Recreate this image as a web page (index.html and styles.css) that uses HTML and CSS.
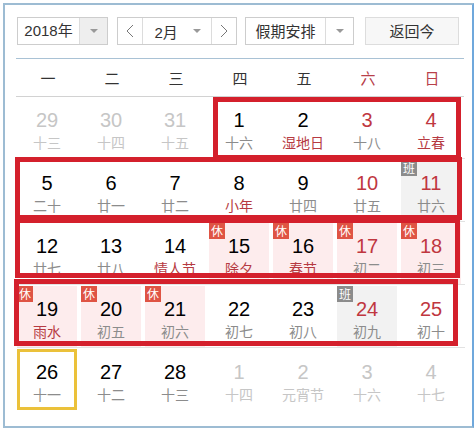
FILE: index.html
```html
<!DOCTYPE html>
<html lang="zh-CN">
<head>
    <meta charset="UTF-8">
    <title>万年历</title>
    <link rel="stylesheet" href="styles.css">
</head>
<body>
    <div class="calendar">
        <div class="toolbar">
            <div class="select year">
                <span class="select-text">2018年</span>
                <span class="select-arrow"><i class="tri"></i></span>
            </div>
            <div class="month-group">
                <span class="step"><svg width="8" height="14" viewBox="0 0 8 14"><polyline points="7,1 1,7 7,13" fill="none" stroke="#777" stroke-width="1"/></svg></span>
                <span class="month"><span>2月</span><i class="tri"></i></span>
                <span class="step"><svg width="8" height="14" viewBox="0 0 8 14"><polyline points="1,1 7,7 1,13" fill="none" stroke="#777" stroke-width="1"/></svg></span>
            </div>
            <div class="select holiday">
                <span class="select-text">假期安排</span>
                <span class="select-arrow plain"><i class="tri"></i></span>
            </div>
            <div class="today-btn">返回今</div>
        </div>

        <div class="week-head">
            <span>一</span><span>二</span><span>三</span><span>四</span><span>五</span>
            <span class="weekend">六</span><span class="weekend">日</span>
        </div>

        <div class="days">
            <!-- 第一周 -->
            <div class="day other"><span class="num">29</span><span class="lunar">十三</span></div>
            <div class="day other"><span class="num">30</span><span class="lunar">十四</span></div>
            <div class="day other"><span class="num">31</span><span class="lunar">十五</span></div>
            <div class="day"><span class="num">1</span><span class="lunar">十六</span></div>
            <div class="day"><span class="num">2</span><span class="lunar fest">湿地日</span></div>
            <div class="day"><span class="num red">3</span><span class="lunar">十八</span></div>
            <div class="day"><span class="num red">4</span><span class="lunar fest">立春</span></div>
            <!-- 第二周 -->
            <div class="day"><span class="num">5</span><span class="lunar">二十</span></div>
            <div class="day"><span class="num">6</span><span class="lunar">廿一</span></div>
            <div class="day"><span class="num">7</span><span class="lunar">廿二</span></div>
            <div class="day"><span class="num">8</span><span class="lunar fest">小年</span></div>
            <div class="day"><span class="num">9</span><span class="lunar">廿四</span></div>
            <div class="day"><span class="num red">10</span><span class="lunar">廿五</span></div>
            <div class="day work"><i class="badge">班</i><span class="num red">11</span><span class="lunar">廿六</span></div>
            <!-- 第三周 -->
            <div class="day"><span class="num">12</span><span class="lunar">廿七</span></div>
            <div class="day"><span class="num">13</span><span class="lunar">廿八</span></div>
            <div class="day"><span class="num">14</span><span class="lunar fest">情人节</span></div>
            <div class="day rest"><i class="badge">休</i><span class="num">15</span><span class="lunar fest">除夕</span></div>
            <div class="day rest"><i class="badge">休</i><span class="num">16</span><span class="lunar fest">春节</span></div>
            <div class="day rest"><i class="badge">休</i><span class="num red">17</span><span class="lunar">初二</span></div>
            <div class="day rest"><i class="badge">休</i><span class="num red">18</span><span class="lunar">初三</span></div>
            <!-- 第四周 -->
            <div class="day rest"><i class="badge">休</i><span class="num">19</span><span class="lunar fest">雨水</span></div>
            <div class="day rest"><i class="badge">休</i><span class="num">20</span><span class="lunar">初五</span></div>
            <div class="day rest"><i class="badge">休</i><span class="num">21</span><span class="lunar">初六</span></div>
            <div class="day"><span class="num">22</span><span class="lunar">初七</span></div>
            <div class="day"><span class="num">23</span><span class="lunar">初八</span></div>
            <div class="day work"><i class="badge">班</i><span class="num red">24</span><span class="lunar">初九</span></div>
            <div class="day"><span class="num red">25</span><span class="lunar">初十</span></div>
            <!-- 第五周 -->
            <div class="day today"><span class="num">26</span><span class="lunar">十一</span></div>
            <div class="day"><span class="num">27</span><span class="lunar">十二</span></div>
            <div class="day"><span class="num">28</span><span class="lunar">十三</span></div>
            <div class="day other"><span class="num">1</span><span class="lunar">十四</span></div>
            <div class="day other"><span class="num">2</span><span class="lunar">元宵节</span></div>
            <div class="day other"><span class="num">3</span><span class="lunar">十六</span></div>
            <div class="day other"><span class="num">4</span><span class="lunar">十七</span></div>
        </div>

        <!-- 红色标注框 -->
        <div class="mark mark-1"></div>
        <div class="mark mark-2"></div>
        <div class="mark mark-3"></div>
        <div class="mark mark-4"></div>
    </div>
</body>
</html>
```

FILE: styles.css
```css
body {
    margin: 0;
    background: #fff;
    font-family: "Liberation Sans", "Noto Sans CJK SC", sans-serif;
    color: #333;
}
.calendar {
    position: relative;
    box-sizing: border-box;
    width: 471px;
    height: 425px;
    margin: 3px;
    padding: 12px 0 0 10px;
    border: 2px solid #9dbcd3;
    border-right-color: #6fa8dc;
}
.toolbar {
    display: flex;
    height: 28px;
    margin-left: 2px;
    font-family: "Noto Sans CJK SC", "Liberation Sans", sans-serif;
    font-size: 15px;
}
.select, .month-group {
    display: flex;
    box-sizing: border-box;
    border: 1px solid #cdcdcd;
}
.select-text {
    flex: 1;
    text-align: center;
    line-height: 26px;
    font-family: "Liberation Sans", "Noto Sans CJK SC", sans-serif;
}
.select-arrow {
    display: flex;
    align-items: center;
    justify-content: center;
    width: 27px;
    background: #eeeeee;
    border-left: 1px solid #dcdcdc;
}
.select-arrow.plain { background: #fff; }
.tri {
    width: 0;
    height: 0;
    border-left: 4px solid transparent;
    border-right: 4px solid transparent;
    border-top: 4px solid #999;
}
.year { width: 91px; }
.month-group {
    width: 120px;
    margin-left: 9px;
}
.step {
    display: flex;
    align-items: center;
    justify-content: center;
    width: 25px;
}
.month {
    display: flex;
    align-items: center;
    width: 69px;
    border-left: 1px solid #dcdcdc;
    border-right: 1px solid #dcdcdc;
    font-family: "Liberation Sans", "Noto Sans CJK SC", sans-serif;
}
.month span { margin-left: 11px; }
.month .tri { margin-left: auto; margin-right: 10px; }
.holiday {
    width: 109px;
    margin-left: 8px;
}
.holiday .select-text { font-family: "Noto Sans CJK SC", sans-serif; }
.today-btn {
    box-sizing: border-box;
    width: 94px;
    margin-left: 11px;
    border: 1px solid #dddddd;
    background: #f7f7f7;
    text-align: center;
    line-height: 26px;
}
.week-head {
    display: grid;
    grid-template-columns: repeat(7, 64px);
    width: 448px;
    height: 37px;
    margin-top: 13px;
    margin-left: 1px;
    border-top: 1px solid #a9c2d5;
    border-bottom: 1px solid #d2d2d2;
    font-family: "Noto Sans CJK SC", sans-serif;
    font-size: 15px;
    line-height: 37px;
    text-align: center;
    color: #333;
}
.week-head .weekend { color: #b8404a; }
.days {
    display: grid;
    grid-template-columns: repeat(7, 60px);
    grid-auto-rows: 61px;
    column-gap: 4px;
    row-gap: 2px;
    width: 448px;
    margin-left: 2px;
    /* 行分隔线 */
    background: repeating-linear-gradient(to bottom, transparent 0 61px, #e2e2e2 61px 62px, transparent 62px 63px);
}
.day {
    position: relative;
    box-sizing: border-box;
    padding-top: 11px;
    text-align: center;
    background: #fff;
}
.day.other, .day.today { background: transparent; }
.num {
    display: block;
    font-size: 20px;
    line-height: 24px;
    color: #000;
}
.lunar {
    display: block;
    margin-top: 1px;
    font-family: "Noto Sans CJK SC", sans-serif;
    font-size: 14px;
    line-height: 18px;
    color: #8c8c8c;
}
.num.red { color: #c0373f; }
.lunar.fest { color: #b63a42; }
.other .num, .other .lunar { color: #c6c6c6; }
.day.rest { background: #fdeced; }
.day.work { background: #f2f2f2; }
.badge {
    position: absolute;
    top: 0;
    left: 0;
    width: 16px;
    height: 16px;
    background: #df5444;
    color: #fff;
    font-style: normal;
    font-family: "Noto Sans CJK SC", sans-serif;
    font-size: 12px;
    line-height: 16px;
}
.work .badge { background: #8c8c8c; }
.today {
    padding-top: 8px;
    border: 3px solid #ebc13a;
}
.mark {
    position: absolute;
    box-sizing: border-box;
    border: 5px solid #d4202c;
}
.mark-1 { left: 208px; top: 92px; width: 248px; height: 63px; }
.mark-2 { left: 10px; top: 152px; width: 447px; height: 63px; }
.mark-3 { left: 10px; top: 213px; width: 445px; height: 60px; }
.mark-4 { left: 9px; top: 274px; width: 444px; height: 67px; }
```
